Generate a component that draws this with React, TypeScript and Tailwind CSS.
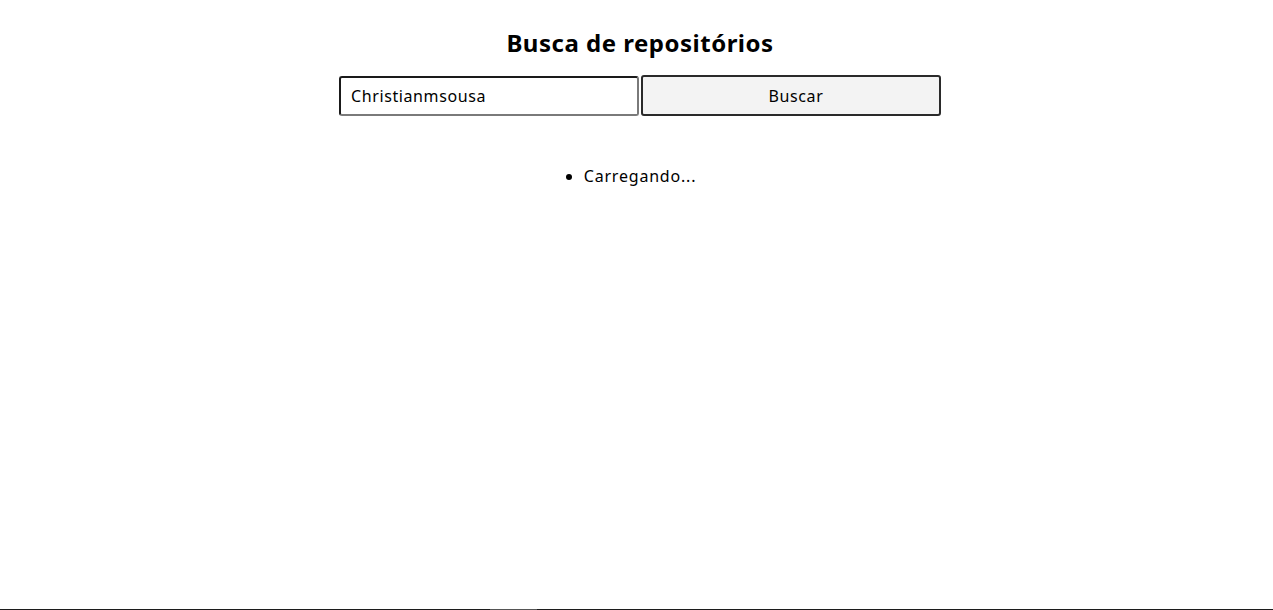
export default function App() {
  return (
    <div
      className="flex min-h-[610px] flex-col bg-white text-black"
      style={{ fontFamily: '"Noto Sans", "Open Sans", sans-serif' }}
    >
      {/* Main search area */}
      <main className="flex flex-1 flex-col items-center pl-[7px] pt-[25px]">
        <h2 className="text-[24px] leading-[36px] font-bold tracking-[0.5px]">Busca de repositórios</h2>

        <form className="mt-[14px] flex items-start gap-[2px]" onSubmit={(e) => e.preventDefault()}>
          <input
            type="text"
            defaultValue="Christianmsousa"
            className="mt-px h-[40px] w-[300px] rounded-[3px] border-2 border-t-[#1a1a1a] border-l-[#1a1a1a] border-r-[#7a7a7a] border-b-[#7a7a7a] bg-white px-[10px] text-[16px] tracking-[0.6px] outline-none"
          />
          <button
            type="submit"
            className="h-[41px] w-[300px] rounded-[3px] border-2 border-[#2a2a2a] bg-[#f3f3f3] pl-[10px] text-[16px] tracking-[0.6px]"
          >
            Buscar
          </button>
        </form>

        <ul className="mt-[48px] list-disc pl-0 text-[16px] leading-[24px] tracking-[0.8px]">
          <li>Carregando...</li>
        </ul>
      </main>

      {/* Bottom edge */}
      <div className="flex h-px w-full bg-[#1c1c1c]">
        <div className="ml-[490px] h-px w-[47px] bg-[#555]" />
      </div>
    </div>
  );
}
